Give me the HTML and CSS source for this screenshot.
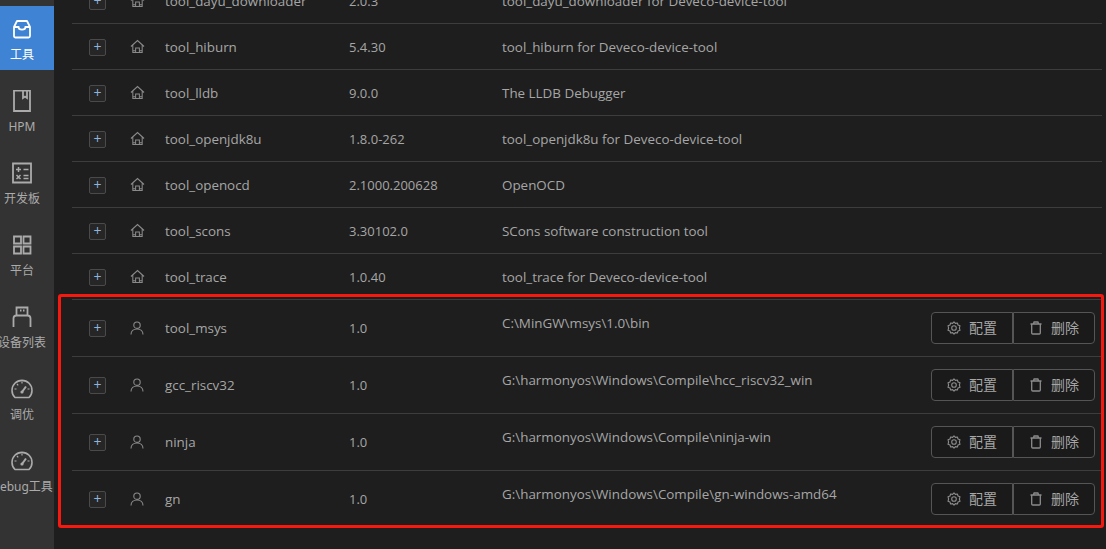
FILE: index.html
```html
<!DOCTYPE html>
<html lang="zh">
<head>
<meta charset="utf-8">
<title>DevEco Tools</title>
<link rel="stylesheet" href="styles.css">
</head>
<body>
<svg class="defs" width="0" height="0">
  <defs>
    <symbol id="i-home" viewBox="0 0 16 16"><path d="M1 8 8 1.600 15 8M3 6.600V14.500H13V6.600M6 14.500V9.500H10V14.500M3 12.500H6M10 12.500H13" fill="none" stroke="currentColor" stroke-width="1.100"/></symbol>
    <symbol id="i-user" viewBox="0 0 14 14"><circle cx="7" cy="4.200" r="3.200" fill="none" stroke="currentColor" stroke-width="1.100"/><path d="M1 13.500C1 10.200 3.500 8 7 8S13 10.200 13 13.500" fill="none" stroke="currentColor" stroke-width="1.100"/></symbol>
    <symbol id="i-gear" viewBox="0 0 14 14"><path d="M7 .8 8.400 2.400 10.400 2 11 4 13 4.700 12.400 7 13 9.300 11 10 10.400 12 8.400 11.600 7 13.200 5.600 11.600 3.600 12 3 10 1 9.300 1.600 7 1 4.700 3 4 3.600 2 5.600 2.400Z" fill="none" stroke="currentColor" stroke-width="1.100" stroke-linejoin="round"/><circle cx="7" cy="7" r="2.300" fill="none" stroke="currentColor" stroke-width="1.100"/></symbol>
    <symbol id="i-trash" viewBox="0 0 14 14"><path d="M1.500 3H12.500M4.800 3V1.500Q4.800 1 5.300 1H8.700Q9.200 1 9.200 1.500V3M2.700 3V12Q2.700 13 3.700 13H10.300Q11.300 13 11.300 12V3" fill="none" stroke="currentColor" stroke-width="1.300"/></symbol>
    <symbol id="i-gauge" viewBox="0 0 22 20"><path d="M4 18.500A10 10 0 1 1 18 18.500Z" fill="none" stroke="currentColor" stroke-width="1.600" stroke-linejoin="round"/><path d="M11 13 15 7.500" stroke="currentColor" stroke-width="2"/><path d="M3.500 10H5.500M16.500 10H18.500M6 5 7.200 6.400M11 2.500V4.500" stroke="currentColor" stroke-width="1.200"/><circle cx="11" cy="13" r="1.600" fill="currentColor"/></symbol>
  </defs>
</svg>

<div class="app">
  <nav class="sidebar">
    <a class="nav-item active">
      <svg class="nav-icon" viewBox="0 0 22 22"><path d="M6 3H16L19 9V18A1.500 1.500 0 0 1 17.500 19.500H4.500A1.500 1.500 0 0 1 3 18V9Z" fill="none" stroke="currentColor" stroke-width="1.800" stroke-linejoin="round"/><path d="M3 9H7.500C7.500 12.500 14.500 12.500 14.500 9H19" fill="none" stroke="currentColor" stroke-width="1.800"/></svg>
      <span>工具</span>
    </a>
    <a class="nav-item">
      <svg class="nav-icon" viewBox="0 0 22 22"><path d="M3 .5H19V21H3ZM12 .5V8L14 6.500L16 8V.5" fill="none" stroke="currentColor" stroke-width="1.800"/></svg>
      <span>HPM</span>
    </a>
    <a class="nav-item">
      <svg class="nav-icon" viewBox="0 0 22 22"><path d="M2 1.500H20V20.500H2Z" fill="none" stroke="currentColor" stroke-width="1.800"/><path d="M5 7.500H10M7.500 5V10M12.500 7.500H17.500M5.500 13 9.500 17M9.500 13 5.500 17M12.500 13.500H17.500M12.500 16.500H17.500" fill="none" stroke="currentColor" stroke-width="1.500"/></svg>
      <span>开发板</span>
    </a>
    <a class="nav-item">
      <svg class="nav-icon" viewBox="0 0 22 22"><path d="M3 2.500H10V9.500H3ZM12.500 2.500H19.500V9.500H12.500ZM3 12.500H10V19.500H3ZM12.500 12.500H19.500V19.500H12.500Z" fill="none" stroke="currentColor" stroke-width="1.800"/></svg>
      <span>平台</span>
    </a>
    <a class="nav-item">
      <svg class="nav-icon" viewBox="0 0 22 22"><path d="M5.500 1.500H16.500V9.500H5.500ZM9 4.500H10.500M12 4.500H13.500M2.500 21V12.500A3 3 0 0 1 5.500 9.500H16.500A3 3 0 0 1 19.500 12.500V21" fill="none" stroke="currentColor" stroke-width="1.800"/></svg>
      <span>设备列表</span>
    </a>
    <a class="nav-item">
      <svg class="nav-icon"><use href="#i-gauge"/></svg>
      <span>调优</span>
    </a>
    <a class="nav-item">
      <svg class="nav-icon"><use href="#i-gauge"/></svg>
      <span>Debug工具</span>
    </a>
  </nav>

  <main class="main">
    <div class="list">
      <div class="row">
        <button class="expand">+</button><svg class="kind home"><use href="#i-home"/></svg>
        <span class="name">tool_dayu_downloader</span><span class="ver">2.0.3</span><span class="desc">tool_dayu_downloader for Deveco-device-tool</span>
      </div>
      <div class="row">
        <button class="expand">+</button><svg class="kind home"><use href="#i-home"/></svg>
        <span class="name">tool_hiburn</span><span class="ver">5.4.30</span><span class="desc">tool_hiburn for Deveco-device-tool</span>
      </div>
      <div class="row">
        <button class="expand">+</button><svg class="kind home"><use href="#i-home"/></svg>
        <span class="name">tool_lldb</span><span class="ver">9.0.0</span><span class="desc">The LLDB Debugger</span>
      </div>
      <div class="row">
        <button class="expand">+</button><svg class="kind home"><use href="#i-home"/></svg>
        <span class="name">tool_openjdk8u</span><span class="ver">1.8.0-262</span><span class="desc">tool_openjdk8u for Deveco-device-tool</span>
      </div>
      <div class="row">
        <button class="expand">+</button><svg class="kind home"><use href="#i-home"/></svg>
        <span class="name">tool_openocd</span><span class="ver">2.1000.200628</span><span class="desc">OpenOCD</span>
      </div>
      <div class="row">
        <button class="expand">+</button><svg class="kind home"><use href="#i-home"/></svg>
        <span class="name">tool_scons</span><span class="ver">3.30102.0</span><span class="desc">SCons software construction tool</span>
      </div>
      <div class="row">
        <button class="expand">+</button><svg class="kind home"><use href="#i-home"/></svg>
        <span class="name">tool_trace</span><span class="ver">1.0.40</span><span class="desc">tool_trace for Deveco-device-tool</span>
      </div>

      <div class="row tall">
        <button class="expand">+</button><svg class="kind user"><use href="#i-user"/></svg>
        <span class="name">tool_msys</span><span class="ver">1.0</span><span class="desc path">C:\MinGW\msys\1.0\bin</span>
        <div class="actions"><button class="act"><svg><use href="#i-gear"/></svg>配置</button><button class="act"><svg><use href="#i-trash"/></svg>删除</button></div>
      </div>
      <div class="row tall">
        <button class="expand">+</button><svg class="kind user"><use href="#i-user"/></svg>
        <span class="name">gcc_riscv32</span><span class="ver">1.0</span><span class="desc path">G:\harmonyos\Windows\Compile\hcc_riscv32_win</span>
        <div class="actions"><button class="act"><svg><use href="#i-gear"/></svg>配置</button><button class="act"><svg><use href="#i-trash"/></svg>删除</button></div>
      </div>
      <div class="row tall">
        <button class="expand">+</button><svg class="kind user"><use href="#i-user"/></svg>
        <span class="name">ninja</span><span class="ver">1.0</span><span class="desc path">G:\harmonyos\Windows\Compile\ninja-win</span>
        <div class="actions"><button class="act"><svg><use href="#i-gear"/></svg>配置</button><button class="act"><svg><use href="#i-trash"/></svg>删除</button></div>
      </div>
      <div class="row tall last">
        <button class="expand">+</button><svg class="kind user"><use href="#i-user"/></svg>
        <span class="name">gn</span><span class="ver">1.0</span><span class="desc path">G:\harmonyos\Windows\Compile\gn-windows-amd64</span>
        <div class="actions"><button class="act"><svg><use href="#i-gear"/></svg>配置</button><button class="act"><svg><use href="#i-trash"/></svg>删除</button></div>
      </div>
    </div>
    <div class="highlight"></div>
  </main>
</div>
</body>
</html>
```
FILE: styles.css
```css
* { box-sizing: border-box; }
html, body { margin: 0; height: 100%; overflow: hidden; }
body {
  background: #1e1e1e;
  color: #a6a6a6;
  font-family: "Open Sans", "Noto Sans", "Noto Sans CJK SC", sans-serif;
  font-size: 13.4px;
}
.defs { position: absolute; }
.app { display: flex; height: 549px; }

.sidebar {
  width: 54px;
  flex: none;
  background: #333333;
  padding-top: 6px;
  display: flex;
  flex-direction: column;
  gap: 8px;
  overflow: hidden;
}
.nav-item {
  height: 64px;
  flex: none;
  display: flex;
  flex-direction: column;
  align-items: center;
  padding: 12px 10px 0 0;
  gap: 7px;
  color: #ababab;
}
.nav-item span {
  font-size: 12px;
  line-height: 16px;
  white-space: nowrap;
  font-family: "Noto Sans", "Noto Sans CJK SC", sans-serif;
}
.nav-item.active { background: #3f83d4; color: #ffffff; }
.nav-icon { width: 22px; height: 22px; flex: none; }

.main { flex: 1; position: relative; overflow: hidden; min-width: 0; }
.list { margin: -22px 4px 0 18px; }
.row {
  height: 46px;
  display: grid;
  grid-template-columns: 58px 35px 184px 153px 1fr auto;
  align-items: center;
  border-bottom: 1px solid #3d3d3d;
}
.row.tall { height: 57px; }
.row.last { border-bottom-color: transparent; }
.expand {
  width: 17px;
  height: 17px;
  margin: 1px 0 0 17px;
  padding: 0 0 2px;
  background: #262626;
  border: 1px solid #4a4a4a;
  border-radius: 2px;
  color: #8fb3d9;
  font: 14px/13px "Open Sans", sans-serif;
}
.row.tall .expand { margin-top: 0; }
.kind { color: #8a8a8a; }
.kind.home { width: 15px; height: 15px; }
.kind.user { width: 14px; height: 14px; }
.name, .ver, .desc { white-space: nowrap; }
.ver { font-size: 13px; }
.desc.path { padding-bottom: 10px; }
.actions { display: flex; margin-right: 7px; }
.act {
  width: 82px;
  height: 32px;
  background: #1a1a1a;
  border: 1px solid #555555;
  color: #a6a6a6;
  font: 14px/18px "Noto Sans CJK SC", sans-serif;
  display: flex;
  align-items: center;
  justify-content: center;
  gap: 8px;
  padding: 0 0 2px;
}
.act:first-child { border-radius: 4px 0 0 4px; }
.act:last-child { border-radius: 0 4px 4px 0; }
.act svg { width: 14px; height: 14px; color: #8c8c8c; margin-top: 2px; }

.highlight {
  position: absolute;
  left: 4px;
  top: 294px;
  width: 1046px;
  height: 234px;
  border: 3px solid #f5190f;
  border-radius: 3px;
  pointer-events: none;
}
```
